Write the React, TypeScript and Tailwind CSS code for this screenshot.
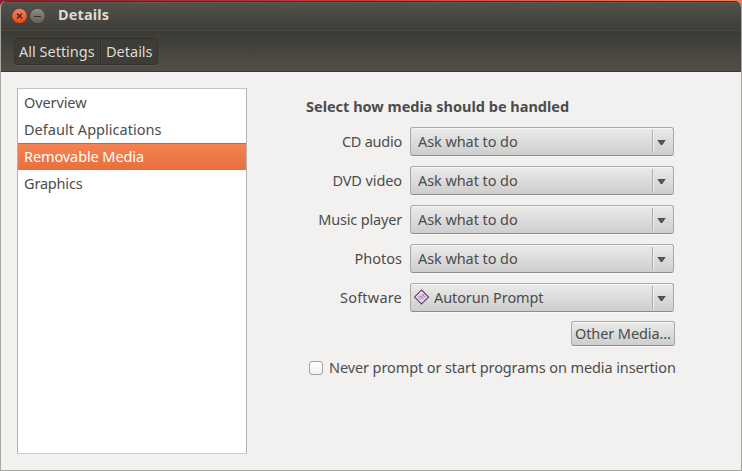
import type { ReactNode } from "react";

function Arrow() {
  return (
    <svg width="9" height="7" viewBox="0 0 9 7" className="block">
      <path d="M0.3 1H8.7L5.2 6H3.8z" fill="#4b4b4b" />
      <path d="M2.8 2.2h3.4L4.5 4.4z" fill="#666" />
    </svg>
  );
}

function Combo({ children }: { children: ReactNode }) {
  return (
    <div className="flex h-[29px] w-[264px] items-stretch rounded-[3px] border border-[#a9a9a7] border-b-[#8c8c8a] bg-linear-to-b from-[#ebebea] via-[#dcdcdc] to-[#cecece] shadow-[inset_0_1px_0_#f8f8f8,0_1px_0_#f8f8f7]">
      <div className="flex flex-1 items-center pl-[7px] leading-[27px]">{children}</div>
      <div className="my-[2px] flex w-[21px] items-center border-l border-[#acacac] pt-px pl-[4px] shadow-[inset_1px_0_0_#f0f0f0]">
        <Arrow />
      </div>
    </div>
  );
}

function RunIcon() {
  return (
    <svg width="16" height="16" viewBox="0 0 16 16" className="-ml-[4px] mr-[4px] block shrink-0 -translate-y-px">
      <path d="M7.5 1L14.5 8L7.5 15L0.5 8Z" fill="#f4eef5" stroke="#66446a" strokeWidth="1.2" />
      <path d="M7.5 3.2L12.3 8L7.5 12.8L2.7 8Z" fill="#dccde0" />
      <path d="M4 9l2-1.8 1.2 1L9.8 5v2.4l1.6.5M5.9 10.7l2-2.3 1.7 1.2" fill="none" stroke="#a285a8" strokeWidth=".9" />
    </svg>
  );
}

const rows = [
  { label: "CD audio", cls: "tracking-[-0.25px]" },
  { label: "DVD video", cls: "tracking-[-0.1px]" },
  { label: "Music player", cls: "tracking-[-0.17px]" },
  { label: "Photos", cls: "tracking-[0px]" },
];

export default function App() {
  return (
    <div className="h-[471px] w-[742px] overflow-hidden bg-linear-to-r from-[#8d1f2c] via-[#c8403a] to-[#f4805f] pt-px font-['Noto_Sans',sans-serif] text-[14.5px] text-[#4c4c4c]">
      <div className="flex h-[470px] flex-col overflow-hidden rounded-t-[6px] border-x border-b border-[#a7a6a2] bg-[#f2f1f0]">
        <header className="-mx-px h-[71px] shrink-0 border-x border-b border-[#3a3934] text-[#dfdbd2]">
          <div className="flex h-[29px] items-center border-t border-[#35342f] bg-linear-to-b from-[#53524a] to-[#3e3d38] pl-[11px] shadow-[inset_0_1px_0_#5e5d55]">
            <svg width="36" height="18" viewBox="0 0 36 18">
              <defs>
                <linearGradient id="close" x2="0" y2="1">
                  <stop stopColor="#f6845d" />
                  <stop offset="1" stopColor="#dd491c" />
                </linearGradient>
                <linearGradient id="min" x2="0" y2="1">
                  <stop stopColor="#918e83" />
                  <stop offset="1" stopColor="#605e56" />
                </linearGradient>
              </defs>
              <circle cx="7.5" cy="9" r="7.6" fill="url(#close)" stroke="#3b2b24" strokeWidth=".4" />
              <path d="M5 6.5l5 5m0-5l-5 5" stroke="#4a2417" strokeWidth="1.3" />
              <circle cx="25.5" cy="9" r="7.6" fill="url(#min)" stroke="#34332e" strokeWidth=".4" />
              <path d="M22 9.5h7" stroke="#33322d" strokeWidth="1.2" />
            </svg>
            <span className="ml-[10px] -mt-[2px] whitespace-nowrap font-bold tracking-[0.12px]">Details</span>
          </div>
          <div className="h-[41px] border-t border-[#494842] bg-linear-to-b from-[#3b3a35] to-[#524f47] pt-[7px] pl-[13px]">
            <div className="flex h-[27px] w-[144px] rounded-[3px] border border-[#33322e] bg-[#3d3c37] leading-[24px] shadow-[0_1px_0_#57554d]">
              <div className="w-[86px] border-r border-[#2f2e2a] pl-[4px] whitespace-nowrap">All Settings</div>
              <div className="border-l border-[#49473f] pl-[4px] whitespace-nowrap">Details</div>
            </div>
          </div>
        </header>
        <main className="flex flex-1">
          <nav className="mt-[16px] ml-[16px] h-[366px] w-[230px] border border-[#b8b5b0] border-t-[#c6c4c1] border-b-[#d0cecb] bg-white leading-[27px] whitespace-nowrap">
            <div className="h-[27px] pl-[6px] tracking-[-0.1px]">Overview</div>
            <div className="h-[27px] pl-[6px] tracking-[0.03px]">Default Applications</div>
            <div className="h-[27px] border-t border-[#d6602f] bg-linear-to-b from-[#f58253] to-[#e86f3b] pl-[6px] leading-[25px] tracking-[-0.1px] text-white">Removable Media</div>
            <div className="h-[27px] pl-[6px] tracking-[-0.18px]">Graphics</div>
          </nav>
          <section className="ml-[59px] flex w-[370px] flex-col pt-[23px] whitespace-nowrap">
            <h1 className="h-[32px] font-bold leading-[22px]">Select how media should be handled</h1>
            <div className="flex flex-col gap-[10px]">
              {rows.map((r) => (
                <div key={r.label} className="flex h-[29px]">
                  <div className="mr-[8px] w-[96px] text-right leading-[29px]"><span className={r.cls}>{r.label}</span></div>
                  <Combo><span className="tracking-[-0.08px]">Ask what to do</span></Combo>
                </div>
              ))}
              <div className="flex h-[29px]">
                <div className="mr-[8px] w-[96px] text-right leading-[29px]"><span className="tracking-[0.2px]">Software</span></div>
                <Combo><RunIcon /><span className="tracking-[-0.1px]">Autorun Prompt</span></Combo>
              </div>
            </div>
            <button className="mt-[9px] ml-[265px] h-[25px] w-[104px] rounded-[3px] border border-[#a9a9a7] border-b-[#8c8c8a] bg-linear-to-b from-[#ebebea] to-[#cecece] pl-[3px] text-left leading-[23px] tracking-[-0.1px] shadow-[inset_0_1px_0_#f8f8f8,0_1px_0_#f8f8f7]">Other Media...</button>
            <label className="mt-[11px] ml-[3px] flex h-[22px] items-center leading-[22px]">
              <span className="mr-[6px] h-[14px] w-[14px] shrink-0 rounded-[3px] border border-[#a3a29f] bg-linear-to-b from-white to-[#f1f1f1]" />
              <span className="-mt-[2px] tracking-[-0.1px]">Never prompt or start programs on media insertion</span>
            </label>
          </section>
        </main>
      </div>
    </div>
  );
}
